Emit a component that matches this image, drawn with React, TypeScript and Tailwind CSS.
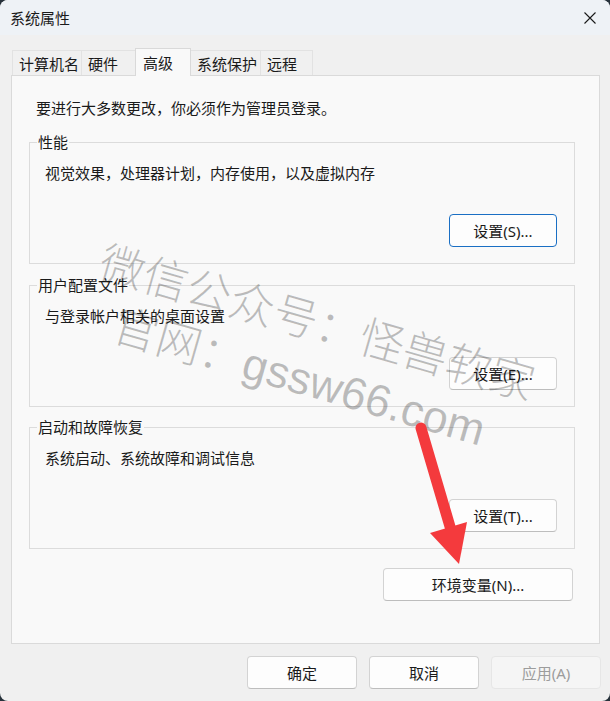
import React from "react";

const tabs = [
  { label: "计算机名", cls: "w-[70px]" },
  { label: "硬件", cls: "w-[55px]" },
  { label: "高级", cls: "w-[56px]", active: true },
  { label: "系统保护", cls: "w-[71px]" },
  { label: "远程", cls: "w-[53px]" },
];

const groups = [
  { title: "性能", desc: "视觉效果，处理器计划，内存使用，以及虚拟内存", btn: "设置(S)...", focus: true, mt: "mt-[24px]" },
  { title: "用户配置文件", desc: "与登录帐户相关的桌面设置", btn: "设置(E)...", mt: "mt-[21px]" },
  { title: "启动和故障恢复", desc: "系统启动、系统故障和调试信息", btn: "设置(T)...", mt: "mt-[20px]" },
];

function Button({
  children,
  className = "",
  focus = false,
  disabled = false,
}: {
  children: React.ReactNode;
  className?: string;
  focus?: boolean;
  disabled?: boolean;
}) {
  let look = "bg-[#fdfdfd] border-[#d3d3d3] border-b-[#bdbdbd] text-[#1a1a1a]";
  if (focus) look = "bg-[#fdfdfd] border-[#1a6fc4] text-[#1a1a1a]";
  if (disabled) look = "bg-[#f5f5f5] border-[#e6e6e6] text-[#9c9c9c]";
  return (
    <div
      className={`h-[33px] rounded-[4px] border flex items-center justify-center text-[15px] leading-[20px] ${look} ${className}`}
    >
      {children}
    </div>
  );
}

export default function App() {
  return (
    <div className="w-[610px] h-[701px] bg-[#27323b] font-['Noto_Sans','Noto_Sans_CJK_SC',sans-serif]">
      <div className="relative w-full h-full rounded-[8px] overflow-hidden bg-[#f0f0f0] flex flex-col text-[#1a1a1a]">
        {/* title bar */}
        <div className="h-[35px] shrink-0 bg-[#eef2f6] flex items-center justify-between pl-[10px] pr-[14px]">
          <span className="text-[15px] leading-[20px]">系统属性</span>
          <svg width="12" height="12" viewBox="0 0 12 12">
            <path d="M0.5 0.5 L11.5 11.5 M11.5 0.5 L0.5 11.5" stroke="#1a1a1a" strokeWidth="1.1" />
          </svg>
        </div>

        {/* tabs */}
        <div className="h-[40px] shrink-0 flex items-end pl-[12px]">
          {tabs.map((t) =>
            t.active ? (
              <div
                key={t.label}
                className={`${t.cls} h-[28px] -mb-px -ml-px relative z-10 bg-[#f9f9f9] border border-b-0 border-[#d9d9d9] pl-[7px] pt-[4px] text-[15px] leading-[20px]`}
              >
                {t.label}
              </div>
            ) : (
              <div
                key={t.label}
                className={`${t.cls} h-[25px] bg-[#f0f0f0] border border-b-0 border-[#e2e2e2] -ml-px first:ml-0 pl-[6px] pt-[3px] text-[15px] leading-[20px]`}
              >
                {t.label}
              </div>
            )
          )}
        </div>

        {/* panel */}
        <div className="ml-[11px] w-[589px] h-[569px] shrink-0 border border-[#dadada] bg-[#f9f9f9] pt-[22px] pl-[24px] flex flex-col">
          <div className="text-[15px] leading-[20px]">要进行大多数更改，你必须作为管理员登录。</div>

          {groups.map((g) => (
            <div
              key={g.title}
              className={`${g.mt} -ml-[7px] w-[546px] h-[122px] relative border border-[#dcdcdc] flex flex-col`}
            >
              <span className="absolute left-[7px] -top-[11px] bg-[#f9f9f9] px-px text-[15px] leading-[20px]">
                {g.title}
              </span>
              <div className="pt-[20px] pl-[15px] text-[15px] leading-[20px]">{g.desc}</div>
              <Button focus={g.focus} className="w-[108px] self-end mt-auto mr-[17px] mb-[16px]">
                {g.btn}
              </Button>
            </div>
          ))}

          <div className="-ml-[7px] w-[546px] mt-[19px] flex justify-end pr-[2px]">
            <Button className="w-[190px]">环境变量(N)...</Button>
          </div>
        </div>

        {/* footer */}
        <div className="flex justify-end gap-[12px] pt-[12px] pr-[9px]">
          <Button className="w-[110px]">确定</Button>
          <Button className="w-[110px]">取消</Button>
          <Button className="w-[110px]" disabled>
            应用(A)
          </Button>
        </div>

        {/* watermark */}
        <div className="absolute left-[107px] top-[240px] origin-top-left rotate-[16deg] pointer-events-none whitespace-nowrap text-[45px] leading-[45px] font-light text-black/25 font-['Liberation_Sans','Noto_Sans_CJK_SC',sans-serif]">
          <div>微信公众号：怪兽软家</div>
          <div className="mt-[12px] ml-[30px]">官网：gssw66.com</div>
        </div>

        {/* arrow */}
        <svg
          className="absolute inset-0 pointer-events-none"
          width="610"
          height="701"
          viewBox="0 0 610 701"
        >
          <line x1="421" y1="428" x2="451" y2="530" stroke="#f43a3d" strokeWidth="11" strokeLinecap="round" />
          <path d="M430 533 L467 522 L459 564 Z" fill="#f43a3d" />
        </svg>
      </div>
    </div>
  );
}
